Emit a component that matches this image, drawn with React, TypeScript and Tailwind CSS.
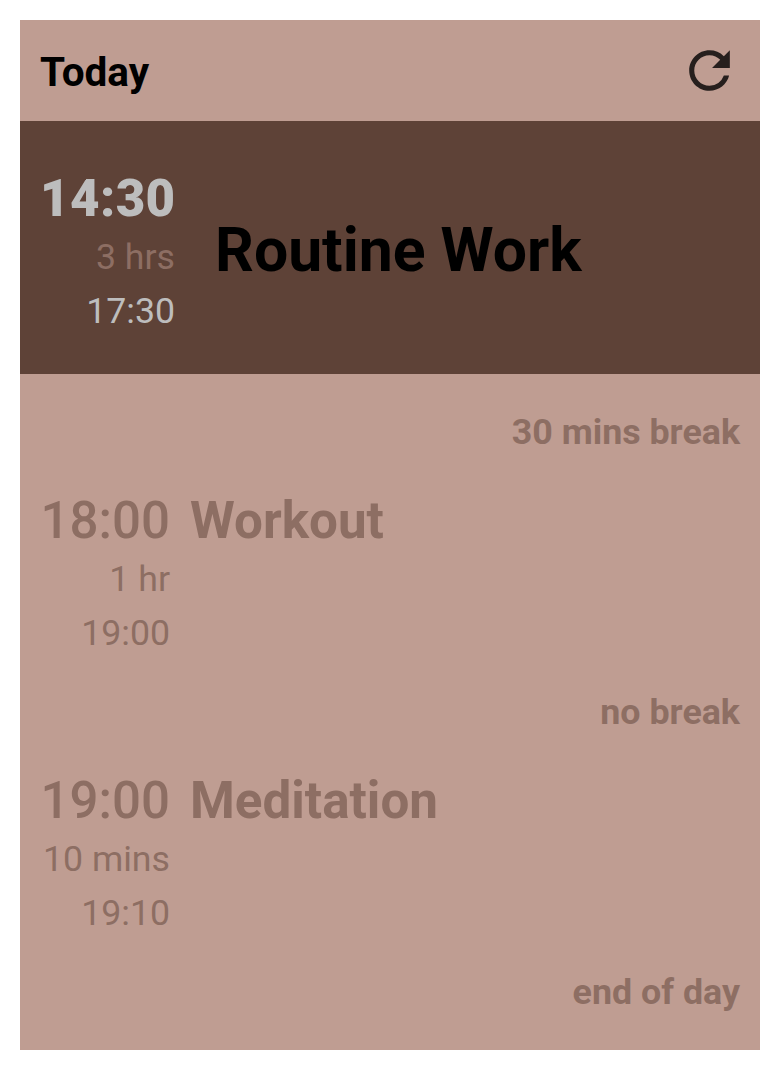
import React from "react";

type Item = { start: string; length: string; end: string; title: string; after: string };

const items: Item[] = [
  { start: "18:00", length: "1 hr", end: "19:00", title: "Workout", after: "no break" },
  { start: "19:00", length: "10 mins", end: "19:10", title: "Meditation", after: "end of day" },
];

function Break({ text }: { text: string }) {
  return <div className="h-[54px] text-right text-[35.8px] font-bold leading-[54px]">{text}</div>;
}

export default function App() {
  return (
    <div className="h-[1070px] w-[780px] bg-white p-5 font-['Roboto',sans-serif]">
      <div className="h-[1030px] bg-[#bf9d92] text-[#8d6e63]">
        <header className="flex h-[101px] items-center justify-between pl-5 pr-[20px] text-black">
          <h1 className="pt-[2px] text-[40.5px] font-bold leading-[60px]">Today</h1>
          <svg viewBox="0 0 24 24" className="size-[61px]" fill="#261f1d">
            <path d="M17.65 6.35A7.958 7.958 0 0 0 12 4c-4.42 0-7.99 3.58-7.99 8s3.57 8 7.99 8c3.73 0 6.84-2.55 7.73-6h-2.08A5.99 5.99 0 0 1 12 18c-3.31 0-6-2.69-6-6s2.69-6 6-6c1.66 0 3.14.69 4.22 1.78L13 11h7V4l-2.35 2.35z" />
          </svg>
        </header>
        <section className="flex h-[253px] items-center bg-[#5e4237] pl-5">
          <div className="w-[135px] pt-[3px] text-right text-[35.7px] leading-[54px]">
            <div className="h-[69px] text-[51px] font-black leading-[75px] tracking-[0.4px] text-[#bdbdbd]">14:30</div>
            <div className="text-[#8d6e63]">3 hrs</div>
            <div className="text-[#bdbdbd]">17:30</div>
          </div>
          <h2 className="ml-10 pt-[6px] text-[60.7px] font-bold leading-[90px] text-black">Routine Work</h2>
        </section>
        <main className="px-5 pt-[31px]">
          <Break text="30 mins break" />
          {items.map((item) => (
            <React.Fragment key={item.start}>
              <section className="flex h-[226px] gap-5 pt-[24px]">
                <div className="w-[130px] text-right text-[35.7px] leading-[54px]">
                  <div className="h-[69px] text-[51px] font-medium leading-[75px]">{item.start}</div>
                  <div>{item.length}</div>
                  <div>{item.end}</div>
                </div>
                <h2 className="text-[51.2px] font-bold leading-[75px]">{item.title}</h2>
              </section>
              <Break text={item.after} />
            </React.Fragment>
          ))}
        </main>
      </div>
    </div>
  );
}
